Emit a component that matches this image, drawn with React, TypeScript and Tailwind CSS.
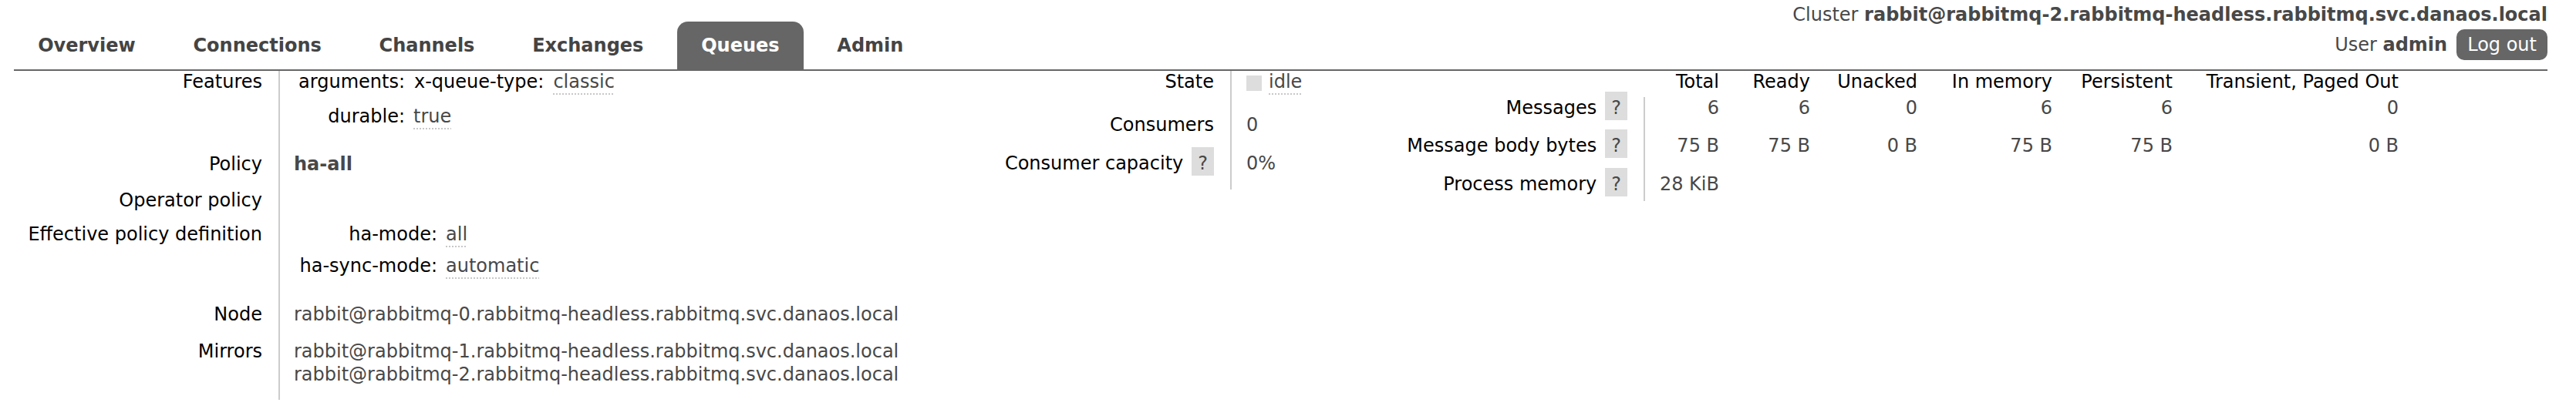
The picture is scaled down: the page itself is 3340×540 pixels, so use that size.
import type { ReactNode } from "react";

const tabs = ["Overview", "Connections", "Channels", "Exchanges", "Queues", "Admin"];

/* stats table: column widths chosen so right edges line up with the reference */
const statCols = [
  { label: "Total", w: "w-[97px]" },
  { label: "Ready", w: "w-[118px]" },
  { label: "Unacked", w: "w-[139px]" },
  { label: "In memory", w: "w-[175px]" },
  { label: "Persistent", w: "w-[156px]" },
  { label: "Transient, Paged Out", w: "w-[293px]" },
];

function Help() {
  return (
    <span className="inline-block ml-[11px] -mt-[7px] -mb-[2px] pt-[7px] pb-[2px] px-[8px] bg-[#dddddd] text-[#484848]">
      ?
    </span>
  );
}

function Abbr({ children }: { children: ReactNode }) {
  return (
    <span className="text-[#484848] underline decoration-dotted decoration-2 decoration-[#c8c8c8] underline-offset-[7px]">
      {children}
    </span>
  );
}

function LeftRow({ label, h, children }: { label: string; h: string; children?: ReactNode }) {
  return (
    <div className={`flex ${h}`}>
      <div className="w-[345px] shrink-0 pr-[21px] text-right text-black border-r-2 border-[#cccccc]">{label}</div>
      <div className="pl-[18px]">{children}</div>
    </div>
  );
}

function MidRow({ label, h, children }: { label: ReactNode; h: string; children?: ReactNode }) {
  return (
    <div className={`flex ${h}`}>
      <div className="w-[397px] shrink-0 pr-[21px] text-right text-black border-r-2 border-[#cccccc]">{label}</div>
      <div className="pl-[19px]">{children}</div>
    </div>
  );
}

function StatRow({ label, h, values }: { label: string; h: string; values: string[] }) {
  return (
    <div className={`flex ${h}`}>
      <div className="w-[383px] shrink-0 pr-[21px] text-right text-black border-r-2 border-[#cccccc]">
        {label}
        <Help />
      </div>
      {statCols.map((c, i) => (
        <div key={c.label} className={`${c.w} shrink-0 text-right pr-[1px]`}>
          {values[i] ?? ""}
        </div>
      ))}
    </div>
  );
}

export default function App() {
  return (
    <div className="w-[3340px] h-[540px] overflow-hidden bg-white text-[24px] leading-[28px] text-[#484848] font-['DejaVu_Sans',Verdana,sans-serif]">
      {/* Header: tabs + cluster / user */}
      <header className="ml-[18px] mr-[37px] flex justify-between border-b-2 border-[#666666]">
        <nav className="flex self-end gap-[12.4px]">
          {tabs.map((t) => (
            <a
              key={t}
              className={`block px-[31.2px] py-[17px] rounded-t-[14px] font-bold ${
                t === "Queues" ? "bg-[#666666] text-white" : "text-[#444444]"
              }`}
            >
              {t}
            </a>
          ))}
        </nav>
        <div className="flex flex-col items-end pt-[5px]">
          <div>
            Cluster <b className="font-bold">rabbit@rabbitmq-2.rabbitmq-headless.rabbitmq.svc.danaos.local</b>
          </div>
          <div className="mt-[5px] mb-[12px] h-[40px] flex items-center gap-[12px]">
            <span>
              User <b className="font-bold">admin</b>
            </span>
            <button className="h-[40px] px-[14px] rounded-[10px] bg-[#666666] text-white leading-[28px]">Log out</button>
          </div>
        </div>
      </header>

      <main className="flex">
        {/* Queue facts */}
        <section className="ml-[18px] w-[1182px] shrink-0">
          <LeftRow label="Features" h="h-[107px]">
            <div className="flex items-baseline h-[45px]">
              <div className="w-[144px] text-right text-black">arguments:</div>
              <div className="ml-[12px] flex items-baseline">
                <span className="text-black">x-queue-type:</span>
                <span className="ml-[12px]">
                  <Abbr>classic</Abbr>
                </span>
              </div>
            </div>
            <div className="flex items-baseline">
              <div className="w-[144px] text-right text-black">durable:</div>
              <div className="ml-[11px]">
                <Abbr>true</Abbr>
              </div>
            </div>
          </LeftRow>
          <LeftRow label="Policy" h="h-[47px]">
            <b className="font-bold">ha-all</b>
          </LeftRow>
          <LeftRow label="Operator policy" h="h-[44px]" />
          <LeftRow label="Effective policy definition" h="h-[104px]">
            <div className="flex items-baseline h-[41px]">
              <div className="w-[186px] text-right text-black">ha-mode:</div>
              <div className="ml-[11px]">
                <Abbr>all</Abbr>
              </div>
            </div>
            <div className="flex items-baseline">
              <div className="w-[186px] text-right text-black">ha-sync-mode:</div>
              <div className="ml-[11px]">
                <Abbr>automatic</Abbr>
              </div>
            </div>
          </LeftRow>
          <LeftRow label="Node" h="h-[48px]">
            rabbit@rabbitmq-0.rabbitmq-headless.rabbitmq.svc.danaos.local
          </LeftRow>
          <LeftRow label="Mirrors" h="h-[77px]">
            <div className="h-[30px]">rabbit@rabbitmq-1.rabbitmq-headless.rabbitmq.svc.danaos.local</div>
            <div>rabbit@rabbitmq-2.rabbitmq-headless.rabbitmq.svc.danaos.local</div>
          </LeftRow>
        </section>

        {/* State / consumers */}
        <section className="w-[550px] shrink-0">
          <MidRow label="State" h="h-[56px]">
            <div className="flex items-start">
              <span className="mt-[6px] w-[20px] h-[20px] bg-[#dddddd]" />
              <span className="ml-[9px]">
                <Abbr>idle</Abbr>
              </span>
            </div>
          </MidRow>
          <MidRow label="Consumers" h="h-[50px]">
            0
          </MidRow>
          <MidRow
            label={
              <>
                Consumer capacity
                <Help />
              </>
            }
            h="h-[48px]"
          >
            0%
          </MidRow>
        </section>

        {/* Message stats */}
        <section className="shrink-0">
          <div className="flex h-[34px] text-black">
            <div className="w-[383px] shrink-0" />
            {statCols.map((c) => (
              <div key={c.label} className={`${c.w} shrink-0 text-right pr-[1px]`}>
                {c.label}
              </div>
            ))}
          </div>
          <StatRow label="Messages" h="h-[48.5px]" values={["6", "6", "0", "6", "6", "0"]} />
          <StatRow label="Message body bytes" h="h-[50px]" values={["75 B", "75 B", "0 B", "75 B", "75 B", "0 B"]} />
          <StatRow label="Process memory" h="h-[36px]" values={["28 KiB"]} />
        </section>
      </main>
    </div>
  );
}
